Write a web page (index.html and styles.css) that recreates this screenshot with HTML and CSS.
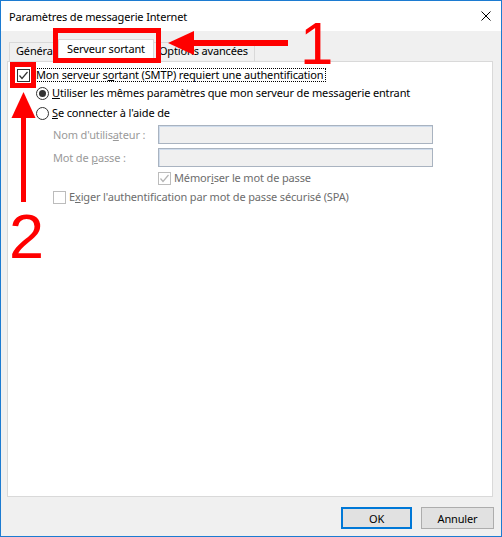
FILE: index.html
```html
<!DOCTYPE html>
<html lang="fr">
<head>
<meta charset="utf-8">
<title>Paramètres de messagerie Internet</title>
<link rel="stylesheet" href="styles.css">
</head>
<body>
<div class="screen">
  <div class="window">
    <div class="titlebar">
      <span class="title">Paramètres de messagerie Internet</span>
      <svg class="close" width="10" height="10" viewBox="0 0 10 10"><path d="M0.5 0.5 L9.5 9.5 M9.5 0.5 L0.5 9.5" stroke="#000" stroke-width="1" fill="none"/></svg>
    </div>
    <div class="client">
      <div class="tabs">
        <div class="tab first">Général</div>
        <div class="tab selected">Serveur sortant</div>
        <div class="tab">Options avancées</div>
      </div>
      <div class="panel">
        <div class="row r1">
          <span class="check"><svg width="13" height="13" viewBox="0 0 13 13"><path d="M2.5 6.5 L5 9.5 L10.5 3" stroke="#333" stroke-width="1.2" fill="none"/></svg></span>
          <span class="label focus">Mon serveur s<u>o</u>rtant (SMTP) requiert une authentification</span>
        </div>
        <div class="row r2">
          <span class="radio on"></span>
          <span class="label"><u>U</u>tiliser les mêmes paramètres que mon serveur de messagerie entrant</span>
        </div>
        <div class="row r3">
          <span class="radio"></span>
          <span class="label"><u>S</u>e connecter à l'aide de</span>
        </div>
        <div class="row field f1">
          <span class="flabel">Nom d'utilis<u>a</u>teur :</span>
          <span class="input"></span>
        </div>
        <div class="row field f2">
          <span class="flabel">Mot de <u>p</u>asse :</span>
          <span class="input"></span>
        </div>
        <div class="row r6">
          <span class="check disabled"><svg width="13" height="13" viewBox="0 0 13 13"><path d="M2.5 6.5 L5 9.5 L10.5 3" stroke="#b4b4b4" stroke-width="1.2" fill="none"/></svg></span>
          <span class="label dis">Mémor<u>i</u>ser le mot de passe</span>
        </div>
        <div class="row r7">
          <span class="check disabled"></span>
          <span class="label dis">E<u>x</u>iger l'authentification par mot de passe sécurisé (SPA)</span>
        </div>
      </div>
      <div class="buttons">
        <button class="btn default">OK</button>
        <button class="btn cancel">Annuler</button>
      </div>
    </div>
  </div>
  <svg class="annot" width="502" height="537" viewBox="0 0 502 537">
    <rect x="55.5" y="30.5" width="103" height="30" fill="none" stroke="#ff0000" stroke-width="5"/>
    <rect x="12.5" y="64.5" width="21" height="21" fill="none" stroke="#ff0000" stroke-width="5"/>
    <polygon points="168,43 194,31 194,55" fill="#ff0000"/>
    <rect x="192" y="40" width="96" height="6" fill="#ff0000"/>
    <polygon points="23.5,92 11.5,118 35.5,118" fill="#ff0000"/>
    <rect x="21" y="116" width="5" height="86" fill="#ff0000"/>
  </svg>
  <div class="num n1">1</div>
  <div class="num n2">2</div>
</div>
</body>
</html>
```

FILE: styles.css
```css
html, body {
  margin: 0;
  padding: 0;
  background: #ffffff;
}

body {
  font-family: "Noto Sans", "Open Sans", sans-serif;
  font-size: 11px;
  letter-spacing: -0.15px;
  color: #000;
}

.screen {
  position: relative;
  width: 502px;
  height: 537px;
}

.window {
  width: 502px;
  height: 537px;
  box-sizing: border-box;
  border: 1px solid #1c7bd1;
  display: flex;
  flex-direction: column;
  background: #f0f0f0;
}

.titlebar {
  height: 30px;
  flex: none;
  background: #ffffff;
  display: flex;
  align-items: center;
  padding-left: 8px;
}

.title {
  font-size: 11px;
  color: #000;
  padding-top: 1px;
}

.close {
  margin-left: auto;
  margin-right: 10px;
}

.client {
  flex: 1;
  display: flex;
  flex-direction: column;
  padding: 8px 7px 7px 6px;
  min-height: 0;
}

.tabs {
  height: 22px;
  flex: none;
  display: flex;
  align-items: flex-end;
  padding-left: 2px;
  position: relative;
  z-index: 2;
}

.tab {
  box-sizing: border-box;
  height: 19px;
  padding: 0 6px 3px;
  display: flex;
  align-items: center;
  border: 1px solid #d9d9d9;
  border-bottom: none;
  background: #f0f0f0;
  white-space: nowrap;
}

.tab.first {
  width: 51px;
  overflow: hidden;
  flex: none;
}

.tab + .tab {
  margin-left: -1px;
}

.tab.selected {
  height: 23px;
  margin: 0 -2px -1px;
  padding: 0 8px 5px;
  background: #ffffff;
  position: relative;
  z-index: 1;
}

.tab.selected + .tab {
  margin-left: 0;
}

.panel {
  flex: 1;
  margin-right: 1px;
  background: #ffffff;
  border: 1px solid #d9d9d9;
  padding: 6px 0 0 9px;
  display: flex;
  flex-direction: column;
}

.row {
  display: flex;
  align-items: center;
  height: 14px;
}

.r2 { margin-top: 4px; padding-left: 19px; }
.r3 { margin-top: 6px; padding-left: 19px; }
.f1 { margin-top: 5px; height: 19px; padding-left: 36px; }
.f2 { margin-top: 4px; height: 19px; padding-left: 36px; }
.r6 { margin-top: 4px; padding-left: 141px; }
.r7 { margin-top: 5px; padding-left: 36px; }

.check {
  box-sizing: border-box;
  width: 13px;
  height: 13px;
  border: 1px solid #333333;
  background: #ffffff;
  position: relative;
  flex: none;
}

.check svg {
  position: absolute;
  left: -1px;
  top: -1px;
}

.check.disabled {
  border-color: #bcbcbc;
}

.radio {
  box-sizing: border-box;
  width: 13px;
  height: 13px;
  border: 1px solid #333333;
  border-radius: 50%;
  background: #ffffff;
  flex: none;
  display: flex;
  align-items: center;
  justify-content: center;
}

.radio.on::after {
  content: "";
  width: 7px;
  height: 7px;
  border-radius: 50%;
  background: #333333;
}

.label {
  margin-left: 3px;
  white-space: nowrap;
  line-height: 12px;
}

.label.focus {
  border: 1px dotted #000;
  padding: 0 2px;
  margin-left: 3px;
}

.label.dis {
  color: #6d6d6d;
}

u {
  text-underline-offset: 1px;
}

.flabel {
  width: 105px;
  flex: none;
  color: #9a9a9a;
  white-space: nowrap;
}

.input {
  box-sizing: border-box;
  width: 275px;
  height: 19px;
  border: 1px solid #a9b3c0;
  box-shadow: inset 1px 1px 0 #cfdcec;
  background: #f0f0f0;
}

.buttons {
  flex: none;
  margin-top: 10px;
  height: 22px;
  display: flex;
  justify-content: flex-end;
  gap: 9px;
}

.btn {
  box-sizing: border-box;
  height: 22px;
  margin: 0;
  padding: 0;
  font-family: "Noto Sans", "Open Sans", sans-serif;
  font-size: 11px;
  letter-spacing: -0.15px;
  color: #000;
  background: #e1e1e1;
  border: 1px solid #adadad;
}

.btn.default {
  width: 71px;
  border: 2px solid #0078d7;
}

.btn.cancel {
  width: 73px;
}

.annot {
  position: absolute;
  left: 0;
  top: 0;
  z-index: 10;
  pointer-events: none;
}

.num {
  position: absolute;
  z-index: 11;
  font-family: "Liberation Sans", Arial, sans-serif;
  letter-spacing: 0;
  color: #ff0000;
  pointer-events: none;
}

.n1 {
  left: 300px;
  top: 14px;
  font-size: 60px;
  line-height: 60px;
}

.n2 {
  left: 9px;
  top: 205px;
  font-size: 63px;
  line-height: 63px;
}
```
